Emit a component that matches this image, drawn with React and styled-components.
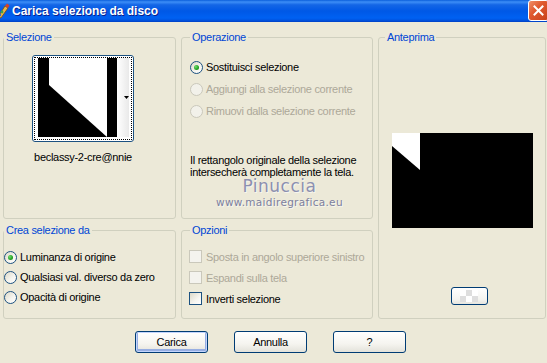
import React from 'react';
import styled, { createGlobalStyle } from 'styled-components';

const Global = createGlobalStyle`
  html, body { margin: 0; padding: 0; background: #ECE9D8; }
  body { font-family: "Liberation Sans", Arial, sans-serif; font-size: 11px; letter-spacing: -0.3px; color: #000; }
`;

const Window = styled.div`
  position: relative;
  width: 547px;
  height: 363px;
  overflow: hidden;
  background: #ECE9D8;
  display: flex;
  flex-direction: column;
`;

const TitleBar = styled.div`
  height: 22px;
  flex: none;
  display: flex;
  align-items: center;
  background: linear-gradient(to bottom, #0B5FDB 0%, #3D8EF7 9%, #1466E6 22%, #0058E6 50%, #0061F2 82%, #0053E0 92%, #0040C4 100%);
`;

const TitleIcon = styled.svg`
  width: 14px;
  height: 16px;
  margin-left: -4px;
  flex: none;
`;

const TitleText = styled.span`
  margin-left: 2px;
  color: #fff;
  font-family: "Liberation Sans", Arial, sans-serif;
  font-weight: bold;
  font-size: 12px;
  letter-spacing: 0;
  text-shadow: 1px 1px #0A1E8C;
  flex: 1;
`;

const CloseBtn = styled.div`
  width: 21px;
  height: 21px;
  box-sizing: border-box;
  margin-right: -2px;
  align-self: flex-start;
  border: 1px solid #fff;
  border-radius: 3px;
  background: linear-gradient(135deg, #F0906A 0%, #E05A30 40%, #C8401B 100%);
  display: flex;
  align-items: center;
  justify-content: center;
`;

const Content = styled.div`
  flex: 1;
  padding: 9px 0 0 3px;
  display: flex;
  flex-direction: column;
`;

const Grid = styled.div`
  display: grid;
  grid-template-columns: 173px 192px 168px;
  grid-template-rows: 188px 95px;
  column-gap: 5px;
  row-gap: 5px;
`;

const Group = styled.fieldset`
  margin: 0;
  padding: 0;
  min-width: 0;
  border: 1px solid #D0D0BF;
  border-radius: 3px;
  grid-row: ${p => p.$row || 'auto'};
  grid-column: ${p => p.$col || 'auto'};
`;

const Legend = styled.legend`
  padding: 0 2px;
  margin-left: ${p => p.$offset}px;
  color: #0046D5;
  font-size: 11px;
  line-height: 13px;
`;

const GroupBody = styled.div`
  display: flex;
  flex-direction: column;
  align-items: ${p => p.$align || 'stretch'};
  padding: ${p => p.$pad};
`;

const Thumb = styled.div`
  width: 102px;
  height: 87px;
  box-sizing: border-box;
  border: 1px solid #1C5180;
  border-radius: 3px;
  padding: 1px;
  background: #fff;
`;

const FocusRing = styled.div`
  height: 100%;
  box-sizing: border-box;
  border: 1px dotted #000;
  display: flex;
  svg { display: block; }
`;

const ThumbLabel = styled.div`
  width: 102px;
  margin-top: 9px;
  text-align: center;
  line-height: 13px;
  white-space: nowrap;
`;

const OptionRow = styled.label`
  display: flex;
  align-items: center;
  gap: ${p => p.$gap || 3}px;
  height: ${p => p.$h}px;
  color: ${p => (p.$disabled ? '#ACA899' : '#000')};
  white-space: nowrap;
`;

const RadioCircle = styled.span`
  width: 13px;
  height: 13px;
  box-sizing: border-box;
  border-radius: 50%;
  flex: none;
  border: 1px solid ${p => (p.$disabled ? '#CAC8BB' : '#1C5180')};
  background: ${p => (p.$disabled ? '#F2F1EA' : 'linear-gradient(135deg, #DCD9C9 0%, #F6F5F0 60%, #FFFFFF 100%)')};
  display: flex;
  align-items: center;
  justify-content: center;
  &::after {
    content: '';
    display: ${p => (p.$checked ? 'block' : 'none')};
    width: 5px;
    height: 5px;
    border-radius: 50%;
    background: radial-gradient(circle at 35% 35%, #6FDB6F 0%, #21A121 60%, #1A7F1A 100%);
  }
`;

const CheckBox = styled.span`
  width: 13px;
  height: 13px;
  box-sizing: border-box;
  flex: none;
  border: 1px solid ${p => (p.$disabled ? '#CAC8BB' : '#1C5180')};
  background: ${p => (p.$disabled ? '#F4F3EE' : 'linear-gradient(135deg, #DCD9C9 0%, #F6F5F0 60%, #FFFFFF 100%)')};
`;

const Note = styled.div`
  margin-top: ${p => p.$mt}px;
  line-height: 12px;
`;

const Preview = styled.svg`
  display: block;
  margin-top: 89px;
`;

const PreviewBtn = styled.div`
  width: 37px;
  height: 18px;
  box-sizing: border-box;
  margin-top: 59px;
  margin-left: 14px;
  border: 1px solid #003C74;
  border-radius: 3px;
  background: linear-gradient(to bottom, #FFFFFF 0%, #F4F4F0 70%, #E6E5DE 100%);
  display: flex;
  align-items: center;
  justify-content: center;
`;

const Checker = styled.div`
  width: 18px;
  height: 12px;
  background-color: #fff;
  background-image:
    linear-gradient(45deg, #DEDEDE 25%, transparent 25%, transparent 75%, #DEDEDE 75%),
    linear-gradient(45deg, #DEDEDE 25%, transparent 25%, transparent 75%, #DEDEDE 75%);
  background-size: 12px 12px;
  background-position: 0 0, 6px 6px;
`;

const ButtonRow = styled.div`
  display: flex;
  gap: 26px;
  padding-left: 132px;
  margin-top: 12px;
`;

const Button = styled.button`
  width: 73px;
  height: 22px;
  box-sizing: border-box;
  padding: 0;
  border: 1px solid #003C74;
  border-radius: 3px;
  background: linear-gradient(to bottom, #FFFFFF 0%, #F5F4EF 60%, #E3E2DA 100%);
  font-family: "Liberation Sans", Arial, sans-serif;
  font-size: 11px;
  letter-spacing: -0.3px;
  color: #000;
  box-shadow: ${p => (p.$default ? 'inset 0 0 0 1px #C3D5FD, inset 0 -1px 0 2px #97AEE2' : 'none')};
`;

const Watermark = styled.div`
  position: absolute;
  left: 216px;
  top: 176px;
  display: flex;
  flex-direction: column;
  align-items: center;
  pointer-events: none;
`;

const WmName = styled.span`
  font-family: "DejaVu Sans", sans-serif;
  font-size: 17px;
  line-height: 20px;
  letter-spacing: 0.5px;
  color: #8C90B0;
  text-shadow: 1px 1px 0 rgba(255,255,255,0.6);
`;

const WmUrl = styled.span`
  font-family: "DejaVu Sans", sans-serif;
  font-size: 10.5px;
  line-height: 12px;
  letter-spacing: 0.3px;
  color: #7C809E;
  text-shadow: 1px 1px 0 rgba(255,255,255,0.6);
`;

function Radio({ label, checked, disabled, h }) {
  return (
    <OptionRow $h={h} $disabled={disabled}>
      <RadioCircle $checked={checked} $disabled={disabled} />
      <span>{label}</span>
    </OptionRow>
  );
}

function Check({ label, disabled, h }) {
  return (
    <OptionRow $h={h} $disabled={disabled} $gap={4}>
      <CheckBox $disabled={disabled} />
      <span>{label}</span>
    </OptionRow>
  );
}

export default function App() {
  return (
    <>
      <Global />
      <Window>
        <TitleBar>
          <TitleIcon viewBox="0 0 14 16">
            <path d="M2 14 L9 3 L12 5 L5 15 Z" fill="#E8B84A" stroke="#7A4A10" strokeWidth="0.8" />
            <path d="M9 3 L11 0.5 L13.5 2.5 L12 5 Z" fill="#D8402A" />
            <circle cx="6" cy="9" r="1.4" fill="#3FA34D" />
            <circle cx="4" cy="12" r="1.2" fill="#2F6FD8" />
          </TitleIcon>
          <TitleText>Carica selezione da disco</TitleText>
          <CloseBtn>
            <svg width="11" height="11" viewBox="0 0 11 11">
              <path d="M1.5 1.5 L9.5 9.5 M9.5 1.5 L1.5 9.5" stroke="#fff" strokeWidth="2" strokeLinecap="square" />
            </svg>
          </CloseBtn>
        </TitleBar>
        <Content>
          <Grid>
            <Group $row="1" $col="1">
              <Legend $offset={0}>Selezione</Legend>
              <GroupBody $align="flex-start" $pad="11px 0 0 28px">
                <Thumb>
                  <FocusRing>
                    <svg width="94" height="79" viewBox="0 0 94 79">
                      <defs>
                        <linearGradient id="edge" x1="0" x2="1" y1="0" y2="0">
                          <stop offset="0" stopColor="#FFFFFF" />
                          <stop offset="1" stopColor="#E9E9E9" />
                        </linearGradient>
                      </defs>
                      <rect x="0" y="0" width="94" height="79" fill="#fff" />
                      <rect x="3" y="0" width="11" height="79" fill="#000" />
                      <polygon points="14,27 72,79 14,79" fill="#000" />
                      <rect x="72" y="0" width="10" height="79" fill="#000" />
                      <rect x="82" y="0" width="12" height="79" fill="url(#edge)" />
                      <polygon points="89,38 94,38 91.5,41" fill="#000" />
                    </svg>
                  </FocusRing>
                </Thumb>
                <ThumbLabel>beclassy-2-cre@nnie</ThumbLabel>
              </GroupBody>
            </Group>

            <Group $row="1" $col="2">
              <Legend $offset={8}>Operazione</Legend>
              <GroupBody $pad="12px 0 0 8px">
                <Radio h={22} checked label="Sostituisci selezione" />
                <Radio h={22} disabled label="Aggiungi alla selezione corrente" />
                <Radio h={22} disabled label="Rimuovi dalla selezione corrente" />
                <Note $mt={32}>
                  Il rettangolo originale della selezione<br />
                  intersecherà completamente la tela.
                </Note>
              </GroupBody>
            </Group>

            <Group $row="1 / span 2" $col="3">
              <Legend $offset={6}>Anteprima</Legend>
              <GroupBody $align="center" $pad="0">
                <Preview width="141" height="95" viewBox="0 0 141 95">
                  <rect x="0" y="0" width="141" height="95" fill="#000" />
                  <polygon points="0,0 28,0 28,37 0,13" fill="#fff" />
                </Preview>
                <PreviewBtn>
                  <Checker />
                </PreviewBtn>
              </GroupBody>
            </Group>

            <Group $row="2" $col="1">
              <Legend $offset={0}>Crea selezione da</Legend>
              <GroupBody $pad="10px 0 0 0">
                <Radio h={20} checked label="Luminanza di origine" />
                <Radio h={20} label="Qualsiasi val. diverso da zero" />
                <Radio h={20} label="Opacità di origine" />
              </GroupBody>
            </Group>

            <Group $row="2" $col="2">
              <Legend $offset={8}>Opzioni</Legend>
              <GroupBody $pad="9px 0 0 7px">
                <Check h={21} disabled label="Sposta in angolo superiore sinistro" />
                <Check h={21} disabled label="Espandi sulla tela" />
                <Check h={21} label="Inverti selezione" />
              </GroupBody>
            </Group>
          </Grid>
          <ButtonRow>
            <Button $default>Carica</Button>
            <Button>Annulla</Button>
            <Button>?</Button>
          </ButtonRow>
        </Content>
        <Watermark>
          <WmName>Pinuccia</WmName>
          <WmUrl>www.maidiregrafica.eu</WmUrl>
        </Watermark>
      </Window>
    </>
  );
}
